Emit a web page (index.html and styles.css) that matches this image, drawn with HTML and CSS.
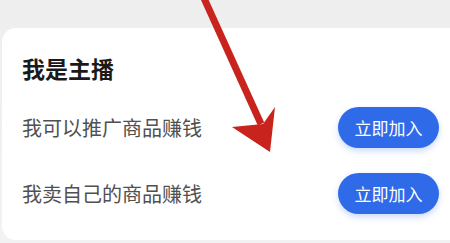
FILE: index.html
```html
<!DOCTYPE html>
<html lang="zh">
<head>
  <meta charset="UTF-8">
  <meta name="viewport" content="width=device-width, initial-scale=1.0">
  <title>我是主播</title>
  <link rel="stylesheet" href="styles.css">
</head>
<body>
  <div class="page">
    <div class="card">
      <h2 class="title">我是主播</h2>
      <div class="row">
        <span class="label">我可以推广商品赚钱</span>
        <button class="join">立即加入</button>
      </div>
      <div class="row">
        <span class="label">我卖自己的商品赚钱</span>
        <button class="join">立即加入</button>
      </div>
    </div>

    <!-- red annotation arrow -->
    <svg class="arrow" width="450" height="243" viewBox="0 0 450 243">
      <line x1="203" y1="-4" x2="261" y2="124" stroke="#c8231c" stroke-width="7"/>
      <polygon points="232,127 263,124 275,107 270,152" fill="#c8231c"/>
    </svg>
  </div>
</body>
</html>
```

FILE: styles.css
```css
body {
  margin: 0;
  font-family: "Noto Sans CJK SC", "Noto Sans", sans-serif;
  background: linear-gradient(to bottom, #eeeeee, #f2f2f2);
}
.page {
  position: relative;
  height: 243px;
  overflow: hidden;
  padding: 28px 0 0 2px;
  box-sizing: border-box;
}
.card {
  background: #fff;
  border-radius: 14px 0 0 14px;
  padding: 27px 11px 25px 20px;
  height: 212px;
  box-sizing: border-box;
}
.title {
  margin: 0 0 26px;
  font-size: 23px;
  line-height: 26px;
  font-weight: 700;
  color: #1a1a1a;
}
.row {
  display: flex;
  align-items: center;
  justify-content: space-between;
  height: 41px;
  margin-bottom: 25px;
}
.label {
  font-size: 20px;
  color: #505050;
}
.join {
  width: 101px;
  height: 41px;
  border: none;
  border-radius: 21px;
  background: #2f6be8;
  color: #fff;
  font-family: inherit;
  font-size: 17px;
  box-shadow: 0 3px 6px rgba(47, 107, 232, 0.25);
}
.arrow {
  position: absolute;
  left: 0;
  top: 0;
}
```
